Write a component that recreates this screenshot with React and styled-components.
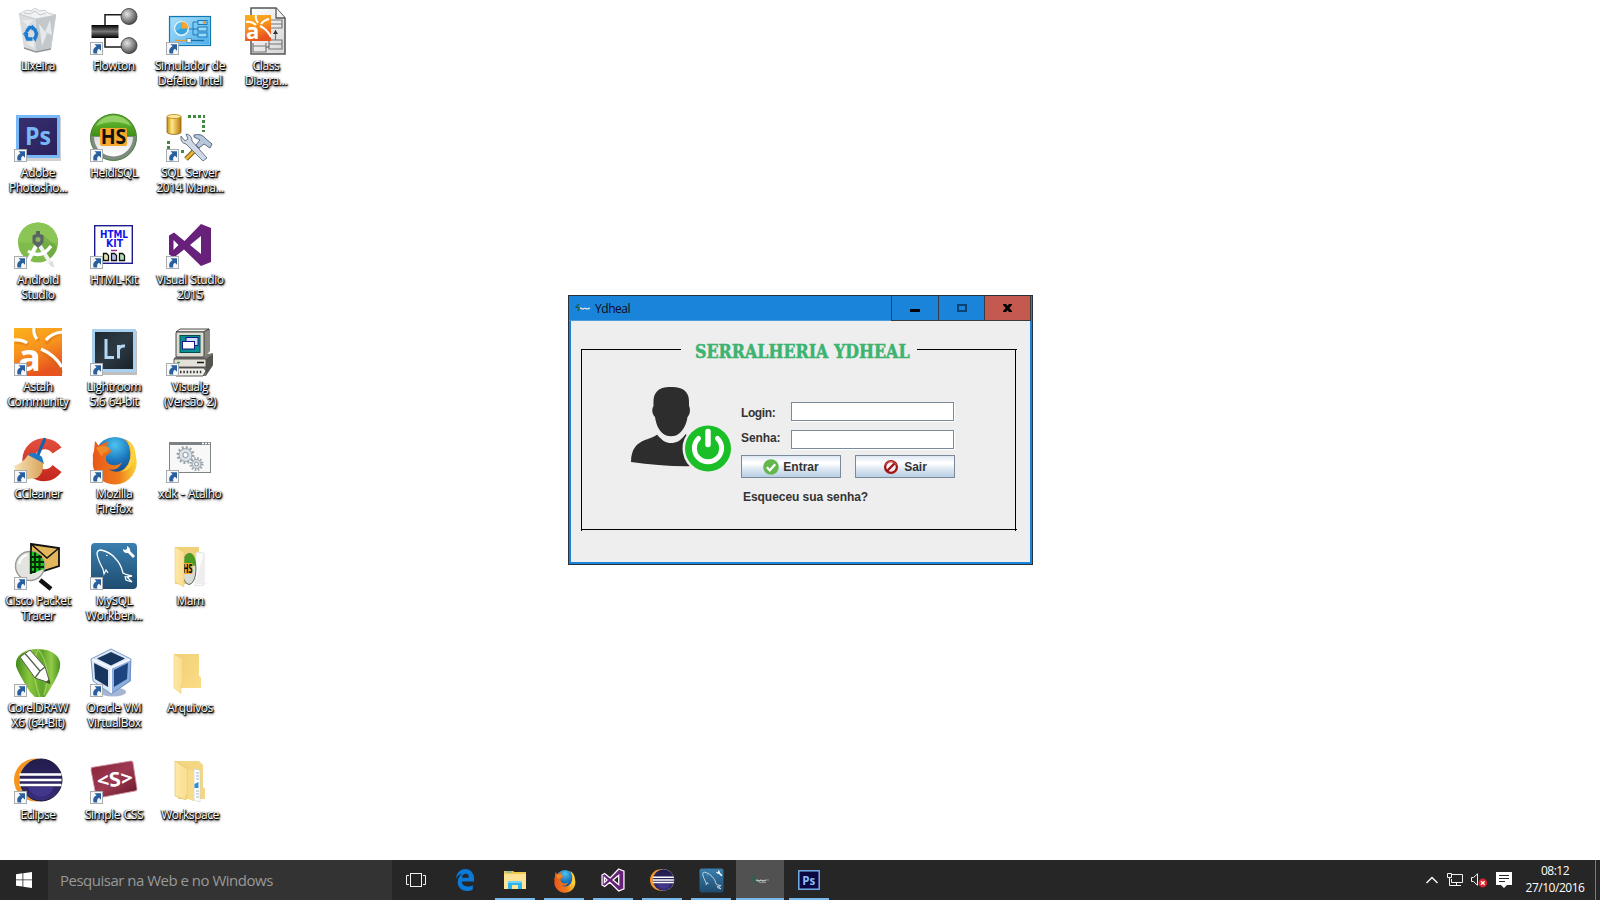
import React from "react";
import styled, { createGlobalStyle } from "styled-components";

const GlobalStyle = createGlobalStyle`
  html, body { margin: 0; padding: 0; background: #fff; }
  body { overflow: hidden; font-family: "Open Sans", "Noto Sans", sans-serif; }
  * { box-sizing: border-box; }
  svg { display: block; overflow: visible; }
`;

const Screen = styled.div`
  position: relative;
  width: 1600px;
  height: 900px;
  display: flex;
  flex-direction: column;
  background: #fff;
`;

/* ---------- desktop ---------- */

const Desktop = styled.main`
  flex: 1;
  display: flex;
`;

const IconColumn = styled.div`
  display: flex;
  flex-direction: column;
  width: 76px;
`;

const IconCell = styled.div`
  height: 107px;
  padding-top: 7px;
  display: flex;
  flex-direction: column;
  align-items: center;
`;

const Label = styled.div`
  margin-top: 3px;
  font-size: 12px;
  line-height: 15px;
  letter-spacing: -0.45px;
  word-spacing: 1px;
  text-align: center;
  white-space: pre;
  color: #fff;
  text-shadow: 1px 1px 1px #000, 0 1px 1px #000, 1px 1px 2px #000, 1px 2px 3px rgba(0, 0, 0, 0.7), -1px 0 1px rgba(0, 0, 0, 0.6);
`;

const Glyph = ({ shortcut, children, size = 48 }) => (
  <svg width={size} height={size} viewBox="0 0 48 48">
    {children}
    {shortcut && (
      <g>
        <rect x="0.5" y="35.5" width="12" height="12" fill="#f8f8f8" stroke="#a9adb1" />
        <path d="M4.500 37.300h6.500v6.500l-2-2c-1.600 1-2.200 2.300-1.700 4.700H3.500c-1-3.500 .2-5.800 3-7.200z" fill="#2a5f9e" />
      </g>
    )}
  </svg>
);

const HiddenDefs = styled.svg`
  position: absolute;
`;

const Defs = () => (
  <HiddenDefs width="0" height="0">
    <defs>
      <radialGradient id="ball" cx=".38" cy=".35" r=".7">
        <stop offset="0" stopColor="#e4e4e4" /><stop offset=".55" stopColor="#8c8c8c" /><stop offset="1" stopColor="#444" />
      </radialGradient>
      <linearGradient id="bar" x1="0" y1="0" x2="0" y2="1">
        <stop offset="0" stopColor="#000" /><stop offset=".5" stopColor="#777" /><stop offset="1" stopColor="#000" />
      </linearGradient>
      <linearGradient id="orange" x1="0" y1="0" x2=".35" y2="1">
        <stop offset="0" stopColor="#fbb21c" /><stop offset=".5" stopColor="#f7941e" /><stop offset="1" stopColor="#e8541f" />
      </linearGradient>
      <linearGradient id="panel" x1="0" y1="0" x2="1" y2="1">
        <stop offset="0" stopColor="#aee0fb" /><stop offset="1" stopColor="#49aee9" />
      </linearGradient>
      <linearGradient id="paper" x1="0" y1="0" x2="1" y2="1">
        <stop offset="0" stopColor="#fff" /><stop offset="1" stopColor="#d5d5d5" />
      </linearGradient>
      <linearGradient id="ps" x1="0" y1="0" x2="1" y2="1">
        <stop offset="0" stopColor="#37306f" /><stop offset="1" stopColor="#2a205c" />
      </linearGradient>
      <linearGradient id="hsG" x1="0" y1="0" x2="0" y2="1">
        <stop offset="0" stopColor="#6fc53a" /><stop offset="1" stopColor="#3f8f14" />
      </linearGradient>
      <linearGradient id="hsW" x1="0" y1="0" x2="0" y2="1">
        <stop offset="0" stopColor="#ddd" /><stop offset="1" stopColor="#fff" />
      </linearGradient>
      <linearGradient id="gold" x1="0" y1="0" x2="1" y2="0">
        <stop offset="0" stopColor="#c88a10" /><stop offset=".35" stopColor="#ffe88a" /><stop offset="1" stopColor="#b9780a" />
      </linearGradient>
      <linearGradient id="lr" x1="0" y1="0" x2="1" y2="1">
        <stop offset="0" stopColor="#1f2a33" /><stop offset=".5" stopColor="#2e3a43" /><stop offset="1" stopColor="#17212a" />
      </linearGradient>
      <linearGradient id="red" x1="0" y1="0" x2="0" y2="1">
        <stop offset="0" stopColor="#e3503f" /><stop offset="1" stopColor="#c2261c" />
      </linearGradient>
      <linearGradient id="brush" x1="0" y1="0" x2="1" y2="0">
        <stop offset="0" stopColor="#f7e2b5" /><stop offset="1" stopColor="#d9a45c" />
      </linearGradient>
      <radialGradient id="globe" cx=".5" cy=".2" r=".8">
        <stop offset="0" stopColor="#4cc3ef" /><stop offset=".5" stopColor="#1b76bd" /><stop offset="1" stopColor="#123a78" />
      </radialGradient>
      <linearGradient id="fox" x1="0" y1="0" x2="1" y2="0">
        <stop offset="0" stopColor="#e8571a" /><stop offset=".6" stopColor="#ef7d1c" /><stop offset="1" stopColor="#fcd53a" />
      </linearGradient>
      <linearGradient id="sql" x1="0" y1="0" x2="0" y2="1">
        <stop offset="0" stopColor="#3a7fae" /><stop offset="1" stopColor="#1f4c70" />
      </linearGradient>
      <linearGradient id="folder" x1="0" y1="0" x2="1" y2="1">
        <stop offset="0" stopColor="#f0d078" /><stop offset="1" stopColor="#fbdc86" />
      </linearGradient>
      <linearGradient id="flap" x1="0" y1="0" x2="1" y2="0">
        <stop offset="0" stopColor="#ffe9a8" /><stop offset="1" stopColor="#f9dc8e" />
      </linearGradient>
      <linearGradient id="corel" x1="0" y1="0" x2="1" y2="0">
        <stop offset="0" stopColor="#3f8a1c" /><stop offset=".3" stopColor="#8cc63e" /><stop offset=".6" stopColor="#5ea529" /><stop offset=".8" stopColor="#93cb48" /><stop offset="1" stopColor="#4a9222" />
      </linearGradient>
      <linearGradient id="ecl" x1="0" y1="0" x2="0" y2="1">
        <stop offset="0" stopColor="#231c4d" /><stop offset=".7" stopColor="#2f2766" /><stop offset="1" stopColor="#3a2f7c" />
      </linearGradient>
      <linearGradient id="wine" x1="0" y1="0" x2="1" y2="1">
        <stop offset="0" stopColor="#8a2137" /><stop offset=".5" stopColor="#9c3a52" /><stop offset="1" stopColor="#651527" />
      </linearGradient>
    </defs>
  </HiddenDefs>
);

const Bin = () => (
  <>
    <path d="M5 7l15-5 22 6-5 34-15 3-12-4z" fill="#e1e4e6" />
    <path d="M5 7l17 5 20-4-5 34-15 3-12-4z" fill="#d9dcdf" />
    <path d="M22 12l20-4-5 34-15 3z" fill="#c3c8cc" />
    <path d="M5 7l8-4 4 1 4-3 5 3 5-1 3 3 8 2-20 4z" fill="#f1f2f3" stroke="#b9bec2" strokeWidth=".7" />
    <path d="M10 6l6 1 5-3 5 4 6-2" fill="none" stroke="#c3c8cb" strokeWidth="1" />
    <path d="M25 17l8 10-5 12zM36 13l-5 12 7 3zM8 13l6 6 5-6zM12 36l8 5v-7z" fill="#eceeef" opacity=".85" />
    <path d="M10 41l12 4 15-3" fill="none" stroke="#92989d" strokeWidth="1.400" />
    <g fill="none" stroke="#1b7bd0" strokeWidth="3.400">
      <path d="M12.500 24.500l3-4h3" /><path d="M20.500 22l2 4.500-1 4" /><path d="M11.500 27l2 5h5" />
    </g>
    <path d="M18 17.500l4.500 4.500-5 1.500zM23.500 29l-2 6-3-4.500zM8.500 27.500l3.500-4 3 4z" fill="#1b7bd0" />
  </>
);

const Flow = () => (
  <>
    <path d="M39 7.700H15V40h24" fill="none" stroke="#1a1a1a" strokeWidth="1.500" />
    <rect x="1.500" y="18" width="27" height="13" fill="url(#bar)" />
    <circle cx="39" cy="9.500" r="8" fill="url(#ball)" stroke="#333" strokeWidth=".8" />
    <circle cx="39" cy="38.600" r="8" fill="url(#ball)" stroke="#333" strokeWidth=".8" />
  </>
);

const ControlPanel = () => (
  <>
    <rect x="3.500" y="9.500" width="41" height="29" fill="url(#panel)" stroke="#1578ac" strokeWidth="1.200" />
    <rect x="4.600" y="10.600" width="38.800" height="26.800" fill="none" stroke="#7fc9f2" strokeWidth=".8" />
    <circle cx="15.500" cy="21.500" r="6.800" fill="#38a0dc" stroke="#eaf7ff" strokeWidth="1.400" />
    <path d="M15.500 21.500v-7a7 7 0 0 1 7 7z" fill="#f8a62c" />
    <path d="M15 21.500v-6.500a6.500 6.500 0 0 0-5 9z" fill="#5cb9ea" />
    <path d="M23 22h4v-7h5M27 22h5M27 22v6h5" fill="none" stroke="#187bbb" strokeWidth="1" />
    <g fill="#9fd9f8" stroke="#187bbb" strokeWidth="1"><rect x="32" y="13.500" width="9" height="4" /><rect x="32" y="20" width="9" height="4" /><rect x="32" y="26" width="9" height="4" /></g>
    <path d="M37 15.500h3" stroke="#f08a1c" strokeWidth="2" />
    <path d="M9 33.500h14" stroke="#f59a22" strokeWidth="1.300" /><path d="M24 33.500h14" stroke="#1a6ea6" strokeWidth="1.300" />
    <rect x="21" y="31.500" width="4" height="4" fill="#fff" stroke="#1a6ea6" strokeWidth=".6" />
  </>
);

const ClassDiagram = () => (
  <>
    <path d="M9 1h25l9 10v36H9z" fill="url(#paper)" stroke="#555" strokeWidth="1.500" />
    <path d="M34 1v10h9" fill="#f3f3f3" stroke="#555" strokeWidth="1.300" />
    <path d="M29 13h11v8H29M29 17h11M11 36v9h13v-9M11 39h13M27 33h13v9H27zM27 37h13M33.500 33V23M24 41l3-2" fill="none" stroke="#777" strokeWidth="1.200" />
    <path d="M31 27l2.500-4 2.500 4z" fill="#333" />
    <rect x="3" y="8" width="26" height="26" fill="url(#orange)" />
    <path d="M4 15q6-1 10 3M14 8q-1 4 2 8M27 12q-5 1-8 5M18 19q7 3 11 11" fill="none" stroke="#fff" strokeWidth="2" />
    <text x="4" y="31.500" fontFamily="Open Sans" fontWeight="700" fontSize="22" fill="#fff">a</text>
  </>
);

const Photoshop = () => (
  <>
    <rect x="3" y="3" width="44" height="44" fill="#000" opacity=".18" />
    <rect x="2" y="1" width="44" height="43" fill="#78b8f7" />
    <rect x="5" y="4" width="38" height="37" fill="url(#ps)" />
    <text x="11" y="30.500" fontFamily="Open Sans" fontWeight="700" fontSize="25" textLength="26" lengthAdjust="spacingAndGlyphs" fill="#78b8f7">Ps</text>
  </>
);

const Heidi = () => (
  <>
    <circle cx="23.500" cy="23.500" r="23" fill="#7d8a80" />
    <path d="M1 22a22.500 22.500 0 0 1 45 0z" fill="url(#hsG)" />
    <path d="M4 23h39a19.500 19.500 0 0 1-39 0z" fill="url(#hsW)" />
    <path d="M6 12a20 20 0 0 1 35 0q-17-8-35 0z" fill="#a5dc7c" opacity=".7" />
    <circle cx="23.500" cy="23.500" r="23" fill="none" stroke="#4b7a3a" strokeWidth="1" />
    <rect x="10" y="14" width="27" height="18" rx="2" fill="#f2a92c" />
    <text x="10.800" y="30" fontFamily="Open Sans" fontWeight="700" fontSize="20.500" textLength="25.500" lengthAdjust="spacingAndGlyphs" fill="#111">HS</text>
  </>
);

const SqlServer = () => (
  <>
    <path d="M1 2.500v16c2 2.500 12 2.500 14 0v-16z" fill="url(#gold)" stroke="#8f5f08" strokeWidth=".8" />
    <ellipse cx="8" cy="2.500" rx="7" ry="2" fill="#ffe9a0" stroke="#b98310" strokeWidth=".8" />
    <path d="M22 2.500h17M37.500 6v12M2.500 27v8M15 37.500h3" stroke="#3e8a3e" strokeWidth="3" strokeDasharray="3 2" fill="none" />
    <path d="M32 33L20 45" stroke="#8c6414" strokeWidth="5" /><path d="M31 34L20 45" stroke="#e6b83c" strokeWidth="2.500" />
    <path d="M15 22q-1 7 5 8l17 17 4-3-15-17q0-6-6-7l2 5-3 2z" fill="#cfd8e4" stroke="#5b6b80" strokeWidth=".9" />
    <path d="M28 21q8-2 12 4l6 5-2 4-6-4-5 4-3-3 4-5-6-3z" fill="#b7c6da" stroke="#4d5f78" strokeWidth=".9" />
  </>
);

const Android = () => (
  <>
    <circle cx="24" cy="21.500" r="20" fill="#7fbb4b" />
    <path d="M4 21.500a20 20 0 0 1 40 0z" fill="#8bc556" />
    <path d="M28 13l15 13q-2 8-9 13L22 26z" fill="#62983a" opacity=".45" />
    <path d="M22 25L13 42" stroke="#fff" strokeWidth="4" /><path d="M26 25l11 18" stroke="#f1f1f1" strokeWidth="4" />
    <path d="M35 42l3.500-2 2 6.500-4-1.500z" fill="#ddd" />
    <path d="M14 30q13 9 23-5" fill="none" stroke="#fff" strokeWidth="3.200" />
    <path d="M22 10h4v3l3.500 1.500v7L26 25l-2 2-2-2-3.500-3.500v-7L22 13z" fill="#5b6467" />
    <circle cx="24" cy="18.500" r="2.500" fill="#8bb65d" />
  </>
);

const HtmlKit = () => (
  <>
    <rect x="4.700" y="4.700" width="37.600" height="37.600" fill="#fff" stroke="#1c1c8c" strokeWidth="1.400" />
    <text x="10" y="17" fontFamily="DejaVu Sans" fontWeight="700" fontSize="10.500" textLength="28" lengthAdjust="spacingAndGlyphs" fill="#1414f0">HTML</text>
    <text x="16" y="26" fontFamily="DejaVu Sans" fontWeight="700" fontSize="10.500" textLength="17" lengthAdjust="spacingAndGlyphs" fill="#1414f0">KIT</text>
    <path d="M21 29.500h6" stroke="#90208c" strokeWidth="1.400" />
    <g stroke="#111" strokeWidth="1.300"><path d="M13.500 32.500h3l2 2v5h-5z" fill="#e5e6b0" /><path d="M21.500 32.500h3l2 2v5h-5z" fill="#b9c4ef" /><path d="M29.500 32.500h3l2 2v5h-5z" fill="#b4e0b4" /></g>
  </>
);

const VisualStudio = ({ outline }) => (
  <path
    d="M35 3l10 4v34l-10 4-17-16.500L8 36.500l-5-3V14.500l5-3 10.500 8.500zM35 15l-11 9 11 9zM7.500 19v10l5-5z"
    fill="#68217a" fillRule="evenodd" stroke={outline ? "#fff" : "none"} strokeWidth={outline ? 2.400 : 0}
  />
);

const Astah = () => (
  <>
    <rect width="48" height="48" fill="url(#orange)" />
    <path d="M1 14q8 0 13 3M21 0q-1 7 4 13M46 5q-8 3-14 11M27 23q12 8 21 22" fill="none" stroke="#c9660f" strokeWidth="3.500" opacity=".35" />
    <path d="M0 12q8-1 13 3M20 0q-1 6 3 11M48 4q-10 1-16 8M27 21q14 6 21 18" fill="none" stroke="#fff" strokeWidth="3.200" />
    <text x="4" y="43" fontFamily="Open Sans" fontWeight="700" fontSize="38" fill="#fff">a</text>
  </>
);

const Lightroom = () => (
  <>
    <rect x="3" y="3" width="44" height="44" fill="#000" opacity=".25" />
    <rect x="2" y="1" width="44" height="43" fill="#a9d0ee" />
    <rect x="5" y="4" width="38" height="37" fill="url(#lr)" />
    <path d="M16 11v18.500h8M28.500 30.500V17M28.500 22q1-4.500 6.500-4" fill="none" stroke="#b3d8f3" strokeWidth="3" />
  </>
);

const OldPc = () => (
  <>
    <path d="M8 30l5-4h29l5-1v12l-7 11H8z" fill="#777" />
    <path d="M36 26V5l5-4h3v22l-5 6z" fill="#8a8a82" />
    <path d="M10 4l4-3h29l-6 3z" fill="#f1f1ea" stroke="#222" strokeWidth=".8" />
    <rect x="10" y="4" width="28" height="25" rx="1" fill="#dedcd2" stroke="#333" strokeWidth=".9" />
    <rect x="14" y="7.500" width="20" height="17" fill="#0a8f8f" stroke="#064c4c" />
    <rect x="20" y="9.500" width="12" height="8" fill="#cfe0ff" stroke="#17178a" /><rect x="16.500" y="13.500" width="12" height="7.500" fill="#fff" stroke="#17178a" />
    <path d="M8 31h32v8H8z" fill="#e4e2d8" stroke="#333" strokeWidth=".8" />
    <path d="M40 31l7-5v11l-7 10z" fill="#55554f" />
    <path d="M31 34.500h7" stroke="#111" strokeWidth="1.500" /><path d="M11 34.500h3" stroke="#1db51d" strokeWidth="1.500" />
    <path d="M12 40h26l2 3-3 5H10z" fill="#efeee8" stroke="#333" strokeWidth=".8" />
    <path d="M14 44h23" stroke="#333" strokeWidth="2.500" strokeDasharray="1.500 1.800" />
  </>
);

const CCleaner = () => (
  <>
    <path d="M47.500 12.500A21.500 21.500 0 1 0 47.500 37l-9-7a10 10 0 1 1 0-11.500z" fill="url(#red)" />
    <path d="M30.500 4.500L24 20" stroke="#1663ad" strokeWidth="3.200" strokeLinecap="round" />
    <path d="M15 19q6-3 13 3l2 7-16-8z" fill="#1d78c6" />
    <path d="M14 20l15 8q1 10-6 15l-16 2q3-4 3-8l-9-1q0-3-1-5 9-3 14-11z" fill="url(#brush)" />
  </>
);

const Firefox = () => (
  <>
    <circle cx="25" cy="22" r="20" fill="url(#globe)" />
    <path d="M4 16l1-10 4 5q5-4 10-4-3 3-3 6l6 3-6 5q-1 8 6 9 6 1 10-3-4 10-14 7 9 6 17-1 8-8 4-22-1-4-5-7 11 3 12 18a22 22 0 1 1-43 2q-1-4 1-8z" fill="url(#fox)" />
    <path d="M38 8q6 8 1 20-2 5-8 9 12-2 14-15 0-10-8-17z" fill="#fbd63e" opacity=".9" />
    <path d="M6 13q4-3 9-2l5 2-3 4q-5 1-5 5z" fill="#f08a2a" />
  </>
);

const Gear = ({ x, y, r }) => (
  <g transform={`translate(${x} ${y})`}>
    <circle r={r} fill="none" stroke="#9aa5ac" strokeWidth="3" strokeDasharray={`${(2 * Math.PI * r) / 24} ${(2 * Math.PI * r) / 24}`} />
    <circle r={r - 1} fill="#d9e1e6" stroke="#8b979f" strokeWidth=".8" />
    <circle r={r * 0.35} fill="#fff" stroke="#87939b" strokeWidth="1" />
  </g>
);

const Batch = () => (
  <>
    <rect x="3.500" y="7.500" width="41" height="30" fill="#f8f8f8" stroke="#7e8589" />
    <path d="M3 8.500h42" stroke="#7b8185" strokeWidth="3" />
    <path d="M36 8.500h8" stroke="#fff" strokeWidth="1.500" strokeDasharray="2 1" />
    <Gear x={19.500} y={20} r={7.500} /><Gear x={30.500} y={29} r={5.500} />
  </>
);

const Packet = () => (
  <>
    <path d="M17 2l28 4v18l-28 9z" fill="#e2b65a" stroke="#111" strokeWidth="1.800" />
    <path d="M17 2l16 14 12-10" fill="none" stroke="#111" strokeWidth="1.500" />
    <path d="M26 38l11 9" stroke="#111" strokeWidth="4.500" />
    <circle cx="16" cy="24" r="14.500" fill="#e3e3df" stroke="#999" strokeWidth="1.400" />
    <path d="M17 9.500a14.500 14.500 0 0 1 13 17.500l-13 5z" fill="#15c415" />
    <path d="M16.800 9v23M21 10.500v20M25.500 13v15M16 15h12M16 20h14M16 25h14M16 30h5" stroke="#062806" strokeWidth="2" />
    <path d="M5 22q2-8 8-9" stroke="#fff" strokeWidth="2" fill="none" />
  </>
);

const MySql = () => (
  <>
    <rect x="1" y="1" width="46" height="46" rx="4" fill="url(#sql)" />
    <path d="M13 27q-5-9-6-15 0-4 4-4 9 2 14 8 6 6 8 15 1 1 9 3l-5 1 5 5-6-2-1-4" fill="none" stroke="#fff" strokeWidth="1.300" />
    <path d="M13 27l1 5 2-4 2 3M16 13.500h1.500" fill="none" stroke="#fff" strokeWidth="1.200" />
    <path d="M37 8l7 7" stroke="#fff" strokeWidth="2.800" /><path d="M33 7q0 4 4 4 4 0 3-4-1-2-3-3v3l-2 1z" fill="#fff" />
  </>
);

const Folder = ({ kind }) => (
  <>
    {kind === "mam" && (
      <>
        <path d="M9 5h24v8l-10 29H9z" fill="#f0d078" />
        <path d="M30 10l8 1v32l-9 1z" fill="#fbfbfb" stroke="#ddd" strokeWidth=".8" /><path d="M38 11h1v30l3 1H29z" fill="#eee" />
        <ellipse cx="23" cy="27" rx="7" ry="15.500" fill="#d9dbd8" stroke="#5c6a59" />
        <path d="M17 22q2-12 8-11 5 3 5 13z" fill="#4b9a23" />
        <rect x="17" y="21" width="9.500" height="11" fill="#f2a92c" />
        <text x="17" y="31" fontFamily="Open Sans" fontWeight="700" fontSize="11.500" textLength="9.500" lengthAdjust="spacingAndGlyphs">HS</text>
        <path d="M9 5l9 5v35l-9-5z" fill="url(#flap)" stroke="#e8c768" strokeWidth=".5" />
      </>
    )}
    {kind === "plain" && (
      <>
        <path d="M8 5h25v22l2 1.500V39H16L8 36z" fill="url(#folder)" />
        <path d="M8 5l8.500 5v24.500L15 36v8.500L8 39z" fill="url(#flap)" stroke="#ecca6d" strokeWidth=".5" />
      </>
    )}
    {kind === "work" && (
      <>
        <path d="M9 5h24l4 4v22l2 1.500V43H12z" fill="#f3d784" />
        <path d="M28 13l6 1v32l-6-2z" fill="#fff" stroke="#ccc" strokeWidth=".6" />
        <path d="M28.500 28l4-2v6h-4z" fill="#2d8fd0" /><path d="M30 17h3M30 20h3M30 23h3M30 35h3M30 38h3M30 41h3" stroke="#9bb5c9" strokeWidth="1" />
        <path d="M14 6l14 6v33l-14-6z" fill="#f3d681" /><path d="M9 5l13 8v25l-2 2v4L9 40z" fill="url(#flap)" stroke="#dfbc5d" strokeWidth=".6" />
        <path d="M22 13l6 2v30l-6-2z" fill="#f7dc8c" />
      </>
    )}
  </>
);

const Corel = () => (
  <>
    <path d="M24 0q12 0 18 6 5 5 4 12-1 8-13 27l-2 3H21l-5-5Q4 24 2 17 1 9 8 4q6-4 16-4z" fill="url(#corel)" />
    <path d="M24 0q-9 20 2 48M24 0q15 20 6 46" fill="none" stroke="#b6dd79" strokeWidth="1.200" opacity=".7" />
    <path d="M6 8l10-7 15 17 5 16-15-5z" fill="#fff" stroke="#56624c" strokeWidth="1" />
    <path d="M11 4.500L26 22M21 29l5-7 5-4" fill="none" stroke="#56624c" strokeWidth="1.300" /><path d="M36.500 35l-1.500-5-3.500 3.500z" fill="#3b5f22" />
  </>
);

const VBox = () => (
  <>
    <ellipse cx="23" cy="43" rx="13" ry="4.500" fill="#8fa3c9" opacity=".8" />
    <path d="M1 10L21 0l20 10-1 22-19 13L3 32z" fill="#dbe6f7" />
    <path d="M41 10v22L21 45V19z" fill="#8eaede" />
    <path d="M7 9.500L21 3l14 6.500L21 16.500z" fill="#17355f" />
    <path d="M4 14l14 7v17L5 30z" fill="#17355f" /><path d="M38 14l-14 7v17l13-8z" fill="#1e4580" />
    <path d="M1 10l20 9 20-9M21 19v26" fill="none" stroke="#f5f9ff" strokeWidth="2" />
    <path d="M1 10L21 0l20 10-1 22-19 13L3 32z" fill="none" stroke="#5f86bf" strokeWidth=".8" />
  </>
);

const Eclipse = () => (
  <>
    <circle cx="21.500" cy="24" r="21.500" fill="#f7941e" />
    <circle cx="27" cy="24" r="21.500" fill="#fff" /><circle cx="27" cy="24" r="21" fill="url(#ecl)" stroke="#191433" />
    <path d="M14 31h26a13.500 13.500 0 0 1-26 0z" fill="#4b3fa0" opacity=".6" />
    <path d="M5.500 18.500h42M5.500 24h42M5.500 29h42" stroke="#fff" strokeWidth="2.700" />
  </>
);

const SimpleCss = () => (
  <>
    <path d="M1.500 11.500L41 5q2 0 2 2l4 26q0 2-2 2L8 42q-2 0-2-2L1 14z" fill="url(#wine)" stroke="#c9929f" strokeWidth=".9" />
    <text x="7" y="30.500" fontFamily="Open Sans" fontWeight="700" fontSize="20" textLength="36" lengthAdjust="spacingAndGlyphs" fill="#fff" transform="rotate(-6 24 24)">&lt;S&gt;</text>
  </>
);

const columns = [
  [
    { art: <Bin />, label: "Lixeira", plain: true },
    { art: <Photoshop />, label: "Adobe\nPhotosho..." },
    { art: <Android />, label: "Android\nStudio" },
    { art: <Astah />, label: "Astah\nCommunity" },
    { art: <CCleaner />, label: "CCleaner" },
    { art: <Packet />, label: "Cisco Packet\nTracer" },
    { art: <Corel />, label: "CorelDRAW\nX6 (64-Bit)" },
    { art: <Eclipse />, label: "Eclipse" },
  ],
  [
    { art: <Flow />, label: "Flowton" },
    { art: <Heidi />, label: "HeidiSQL" },
    { art: <HtmlKit />, label: "HTML-Kit" },
    { art: <Lightroom />, label: "Lightroom\n5.6 64-bit" },
    { art: <Firefox />, label: "Mozilla\nFirefox" },
    { art: <MySql />, label: "MySQL\nWorkben..." },
    { art: <VBox />, label: "Oracle VM\nVirtualBox" },
    { art: <SimpleCss />, label: "Simple CSS" },
  ],
  [
    { art: <ControlPanel />, label: "Simulador de\nDefeito Intel" },
    { art: <SqlServer />, label: "SQL Server\n2014 Mana..." },
    { art: <VisualStudio />, label: "Visual Studio\n2015" },
    { art: <OldPc />, label: "Visualg\n(Versão 2)" },
    { art: <Batch />, label: "xdk - Atalho" },
    { art: <Folder kind="mam" />, label: "Mam", plain: true },
    { art: <Folder kind="plain" />, label: "Arquivos", plain: true },
    { art: <Folder kind="work" />, label: "Workspace", plain: true },
  ],
  [{ art: <ClassDiagram />, label: "Class\nDiagra...", plain: true }],
];

/* ---------- login window ---------- */

const Window = styled.section`
  position: absolute;
  left: 568px;
  top: 295px;
  width: 465px;
  height: 270px;
  display: flex;
  flex-direction: column;
  border: 1px solid #27323c;
  background: #1a84da;
`;

const TitleBar = styled.header`
  height: 25px;
  display: flex;
  padding-right: 1px;
  flex: none;
`;

const TitleText = styled.div`
  flex: 1;
  display: flex;
  align-items: center;
  gap: 6px;
  padding: 0 0 0 6px;
  font-size: 12px;
  letter-spacing: -0.45px;
  color: #0a0a14;
  border-bottom: 1px solid #4d9bdb;
`;

const WindowButton = styled.button`
  width: ${(p) => p.$w}px;
  height: 25px;
  padding: 0;
  border: solid #3a3a40;
  border-width: 0 ${(p) => (p.$close ? 1 : 0)}px 1px 1px;
  background: ${(p) => (p.$close ? "#c4594f" : "transparent")};
  display: flex;
  align-items: center;
  justify-content: center;
`;

const MinimizeMark = styled.span`
  width: 10px;
  height: 3px;
  margin-top: 5px;
  background: #000;
`;

const MaximizeMark = styled.span`
  width: 10px;
  height: 8px;
  border: 2px solid #0c4371;
`;

const Content = styled.div`
  flex: 1;
  margin: 0 2px 2px;
  padding: 28px 0 0 10px;
  background: #eee;
`;

const GroupHeader = styled.div`
  display: flex;
  width: 436px;
  height: 1px;
`;

const Rule = styled.div`
  flex: none;
  width: ${(p) => p.$w}px;
  height: 1px;
  background: #000;
`;

const GroupTitle = styled.h1`
  flex: 1;
  margin: -9px 0 0;
  padding-left: 14px;
  font: 700 17.600px/24px "DejaVu Serif Condensed", "DejaVu Serif", serif;
  font-stretch: condensed;
  letter-spacing: 0.03px;
  -webkit-text-stroke: 0.5px #3cb371;
  white-space: nowrap;
  color: #3cb371;
`;

const GroupBody = styled.div`
  width: 435px;
  height: 181px;
  margin-bottom: -2px;
  padding: 33px 0 0 46px;
  border: solid #000;
  border-width: 0 1px;
  display: flex;
  gap: 7px;
`;

const Form = styled.div`
  width: 215px;
  padding-top: 19px;
  font: 700 12px/15px "Liberation Sans", Arial, sans-serif;
  letter-spacing: -0.05px;
  color: #333;
`;

const FieldRow = styled.label`
  display: flex;
  height: ${(p) => p.$h}px;
`;

const FieldName = styled.span`
  width: 50px;
  padding-top: ${(p) => p.$top}px;
  letter-spacing: ${(p) => p.$track ?? 0}px;
`;

const Field = styled.input`
  width: 163px;
  height: 19px;
  padding: 0 2px;
  border: 1px solid #7a8a99;
  border-radius: 0;
  background: #fff;
  box-shadow: 1px 1px 0 #fff;
  outline: 0;
`;

const Actions = styled.div`
  display: flex;
  gap: 14px;
`;

const Action = styled.button`
  width: 100px;
  height: 23px;
  padding: 0;
  display: flex;
  align-items: center;
  justify-content: center;
  gap: ${(p) => p.$gap}px;
  border: 1px solid #7a8a99;
  background: linear-gradient(#dde8f3 0%, #fff 32%, #fff 36%, #dfe9f3 60%, #b8cfe5 100%);
  font: inherit;
  color: #333;
`;

const ActionText = styled.span`
  padding-top: 2px;
`;

const Forgot = styled.div`
  padding: 12px 0 0 2px;
`;

const MiniLogo = ({ light, width = 18 }) => (
  <svg width={width} height="8" viewBox={`0 0 ${width} 8`}>
    <path d="M4 0L1 3l3 1-1 3" stroke={light ? "#1d6b45" : "#1c5a44"} strokeWidth="1.300" fill="none" />
    <path d="M5 4l3 1 2-.8 2 .8 3-.8" stroke={light ? "#b9bdb9" : "#d9dbe2"} strokeWidth="1.400" fill="none" />
    {light && <path d="M15 4h3M8 6.500h7" stroke="#8d918d" strokeWidth="1.200" />}
  </svg>
);

const Avatar = () => (
  <svg width="106" height="92" viewBox="628 383 106 92">
    <path d="M671 387c9-.6 16 3 17.500 10 .6 3 .5 6 .5 9 1.800 3 .9 9-1.500 11-1 7-4 13-9 17-4 3-11 3-15 0-5-4-7.500-10-8.500-17-3-3-3.500-8-1.500-11 0-6-.3-10 3-14 3-4 8-5 14.500-5z" fill="#2d2d2d" />
    <path d="M631 462c0-13 6-19 14-22 5-2 9-3 13-6 4 7 8 9 13 9s10-2 14-9l12 6v26q-33 1-66-4z" fill="#2d2d2d" />
    <path d="M657 433c4 6 8 8.500 14 8.500s10-2.500 14.500-8.500" fill="none" stroke="#eee" strokeWidth="1.800" />
    <circle cx="708" cy="448.500" r="25.500" fill="#eee" />
    <circle cx="708" cy="448.500" r="23" fill="#1abf28" />
    <path d="M698.500 438.500a13.600 13.600 0 1 0 19 0" fill="none" stroke="#fff" strokeWidth="5" strokeLinecap="round" />
    <path d="M708 431.500v13" stroke="#fff" strokeWidth="5.500" strokeLinecap="round" />
  </svg>
);

const CheckIcon = () => (
  <svg width="16" height="16" viewBox="0 0 16 16">
    <circle cx="8" cy="8" r="7.800" fill="#62b84c" />
    <path d="M3.800 8.300l3 3 5.400-6" stroke="#fff" strokeWidth="2.300" fill="none" />
  </svg>
);

const BanIcon = () => (
  <svg width="16" height="16" viewBox="0 0 16 16">
    <circle cx="8" cy="8" r="5.900" fill="#f3f3f6" stroke="#a31515" strokeWidth="2.300" />
    <path d="M4 12l8-8" stroke="#a31515" strokeWidth="2.400" />
    <path d="M2.500 6a6 6 0 0 1 11 0" stroke="#dc6a62" strokeWidth=".9" fill="none" />
  </svg>
);

const LoginWindow = () => (
  <Window>
    <TitleBar>
      <TitleText><MiniLogo width={14} />Ydheal</TitleText>
      <WindowButton $w={47}><MinimizeMark /></WindowButton>
      <WindowButton $w={46}><MaximizeMark /></WindowButton>
      <WindowButton $w={47} $close>
        <svg width="9" height="8" viewBox="0 0 9 8"><path d="M0 0h3l1.500 1.700L6 0h3v1L6.300 4 9 7v1H6L4.500 6.300 3 8H0V7l2.700-3L0 1z" fill="#000" /></svg>
      </WindowButton>
    </TitleBar>
    <Content>
      <GroupHeader>
        <Rule $w={100} />
        <GroupTitle>SERRALHERIA YDHEAL</GroupTitle>
        <Rule $w={100} />
      </GroupHeader>
      <GroupBody>
        <Avatar />
        <Form>
          <FieldRow $h={28}><FieldName $top={4} $track={-0.4}>Login:</FieldName><Field /></FieldRow>
          <FieldRow $h={25}><FieldName $top={1} $track={-0.1}>Senha:</FieldName><Field type="password" /></FieldRow>
          <Actions>
            <Action $gap={4}><CheckIcon /><ActionText>Entrar</ActionText></Action>
            <Action $gap={5}><BanIcon /><ActionText>Sair</ActionText></Action>
          </Actions>
          <Forgot>Esqueceu sua senha?</Forgot>
        </Form>
      </GroupBody>
      <Rule $w={436} />
    </Content>
  </Window>
);

/* ---------- taskbar ---------- */

const Taskbar = styled.footer`
  height: 40px;
  display: flex;
  background: #262626;
`;

const Start = styled.div`
  width: 48px;
  display: flex;
  align-items: center;
  justify-content: center;
`;

const Search = styled.div`
  width: 344px;
  padding: 0 0 0 12px;
  display: flex;
  align-items: center;
  background: #333;
  color: #999;
  font-size: 15px;
  letter-spacing: -0.5px;
  white-space: nowrap;
`;

const TaskSlot = styled.div`
  width: ${(p) => p.$w}px;
`;

const TaskButton = styled.div`
  width: 48px;
  height: 40px;
  display: flex;
  align-items: center;
  justify-content: center;
  background: ${(p) => (p.$active ? "#515151" : "transparent")};
  box-shadow: ${(p) => (p.$active ? "inset 0 -2px #76b9ed" : "none")};
`;

const RunningTask = styled(TaskButton)`
  background: linear-gradient(#76b9ed, #76b9ed) center bottom / 40px 2px no-repeat;
`;

const Tray = styled.div`
  margin-left: auto;
  display: flex;
  align-items: center;
  gap: 8px;
`;

const Clock = styled.div`
  width: 70px;
  margin: -2px -3px 0 0;
  text-align: center;
  color: #fff;
  font-size: 12px;
  line-height: 17px;
  letter-spacing: -0.47px;
`;

const ShowDesktop = styled.div`
  width: 5px;
  height: 40px;
  border-left: 1px solid #7c7c7c;
`;

const EdgeIcon = () => (
  <svg width="20" height="22" viewBox="0 0 22 22" preserveAspectRatio="none">
    <path d="M1 9.500C2 3.500 6 0 11.300 0 17.500 0 21 4.500 21 10v2.600H7.500c.2 3.200 3 4.900 6.300 4.900 2.300 0 4.200-.6 5.800-1.600v4.500C17.800 21.400 15.500 22 13 22 7 22 3 18.500 3 13c0-3.500 2-6.300 5-8C4.500 5.500 2.500 7.200 1 9.500zM7.800 8.800h7.500c0-2.600-1.300-4-3.500-4s-3.600 1.600-4 4z" fill="#0b79d8" />
  </svg>
);

const ExplorerIcon = () => (
  <svg width="22" height="18" viewBox="0 0 22 18">
    <path d="M0 0h9l1.500 1H22v17H0z" fill="#f3cb4c" /><path d="M0 3h22v15H0z" fill="#ffe496" />
    <path d="M2 1h6" stroke="#49b7e8" strokeWidth="1" />
    <path d="M4 18v-8h14v8h-4v-4H8v4z" fill="#2db4ec" /><path d="M4 10h14v2H4z" fill="#6fd4f7" />
  </svg>
);

const PsTask = () => (
  <svg width="22" height="20" viewBox="0 0 22 20">
    <rect x=".8" y=".8" width="20.400" height="18.400" fill="#0c0641" stroke="#7ab9f5" strokeWidth="1.400" />
    <text x="4.300" y="14.500" fontFamily="Open Sans" fontWeight="700" fontSize="12" textLength="13" lengthAdjust="spacingAndGlyphs" fill="#86bff7">Ps</text>
  </svg>
);

const TaskViewIcon = () => (
  <svg width="20" height="14" viewBox="0 0 20 14" fill="none" stroke="#f2f2f2">
    <rect x="4.500" y=".5" width="11" height="13" /><path d="M3 2.500H.5v9H3M17 2.500h2.500v9H17" />
  </svg>
);

const tasks = [
  { art: <TaskViewIcon />, state: "idle" },
  { art: <EdgeIcon />, state: "idle", w: 50 },
  { art: <ExplorerIcon />, state: "running" },
  { art: <Glyph size={23}><Firefox /></Glyph>, state: "running" },
  { art: <svg width="26" height="24" viewBox="0 1 48 46"><VisualStudio outline /></svg>, state: "running" },
  { art: <Glyph size={24}><Eclipse /></Glyph>, state: "running" },
  { art: <Glyph size={25}><MySql /></Glyph>, state: "running" },
  { art: <MiniLogo light />, state: "active" },
  { art: <PsTask />, state: "running" },
];

export default function App() {
  return (
    <Screen>
      <GlobalStyle />
      <Defs />
      <Desktop>
        {columns.map((items, i) => (
          <IconColumn key={i}>
            {items.map((item) => (
              <IconCell key={item.label}>
                <Glyph shortcut={!item.plain}>{item.art}</Glyph>
                <Label>{item.label}</Label>
              </IconCell>
            ))}
          </IconColumn>
        ))}
      </Desktop>
      <LoginWindow />
      <Taskbar>
        <Start>
          <svg width="16" height="16" viewBox="0 0 16 16" fill="#fff">
            <path d="M0 2.200L6.500 1.300v6.200H0zM7.300 1.200L16 0v7.500H7.300zM0 8.300h6.500v6.300L0 13.700zM7.300 8.300H16V16l-8.700-1.200z" />
          </svg>
        </Start>
        <Search>Pesquisar na Web e no Windows</Search>
        {tasks.map((t, i) => (
          <TaskSlot key={i} $w={t.w ?? 49}>
            {t.state === "running" ? <RunningTask>{t.art}</RunningTask> : <TaskButton $active={t.state === "active"}>{t.art}</TaskButton>}
          </TaskSlot>
        ))}
        <Tray>
          <svg width="14" height="8" viewBox="0 0 14 8"><path d="M1.500 7L7 1.500 12.500 7" fill="none" stroke="#fff" strokeWidth="1.400" /></svg>
          <svg width="16" height="14" viewBox="0 0 16 14" fill="none" stroke="#f2f2f2">
            <path d="M5 1.500h10.500v8H4.500V6M9.500 9.500v3M6 12.500h8M.5.500h4v4h-4zM2.500 4.500v8H6" />
          </svg>
          <svg width="17" height="15" viewBox="0 0 17 15">
            <path d="M.5 4.500h2L6.500.8v11.500l-4-3.800h-2z" fill="none" stroke="#f2f2f2" />
            <circle cx="11.800" cy="10" r="4.400" fill="#e0242c" /><path d="M10 8.200l3.600 3.600M13.600 8.200L10 11.800" stroke="#fff" strokeWidth="1.400" />
          </svg>
          <svg width="16" height="16" viewBox="0 0 16 16">
            <path d="M0 0h16v13h-5l-3 3-3-3H0z" fill="#fff" /><path d="M3 3.500h10M3 6.500h10M3 9.500h6" stroke="#262626" />
          </svg>
          <Clock>08:12<br />27/10/2016</Clock>
          <ShowDesktop />
        </Tray>
      </Taskbar>
    </Screen>
  );
}
